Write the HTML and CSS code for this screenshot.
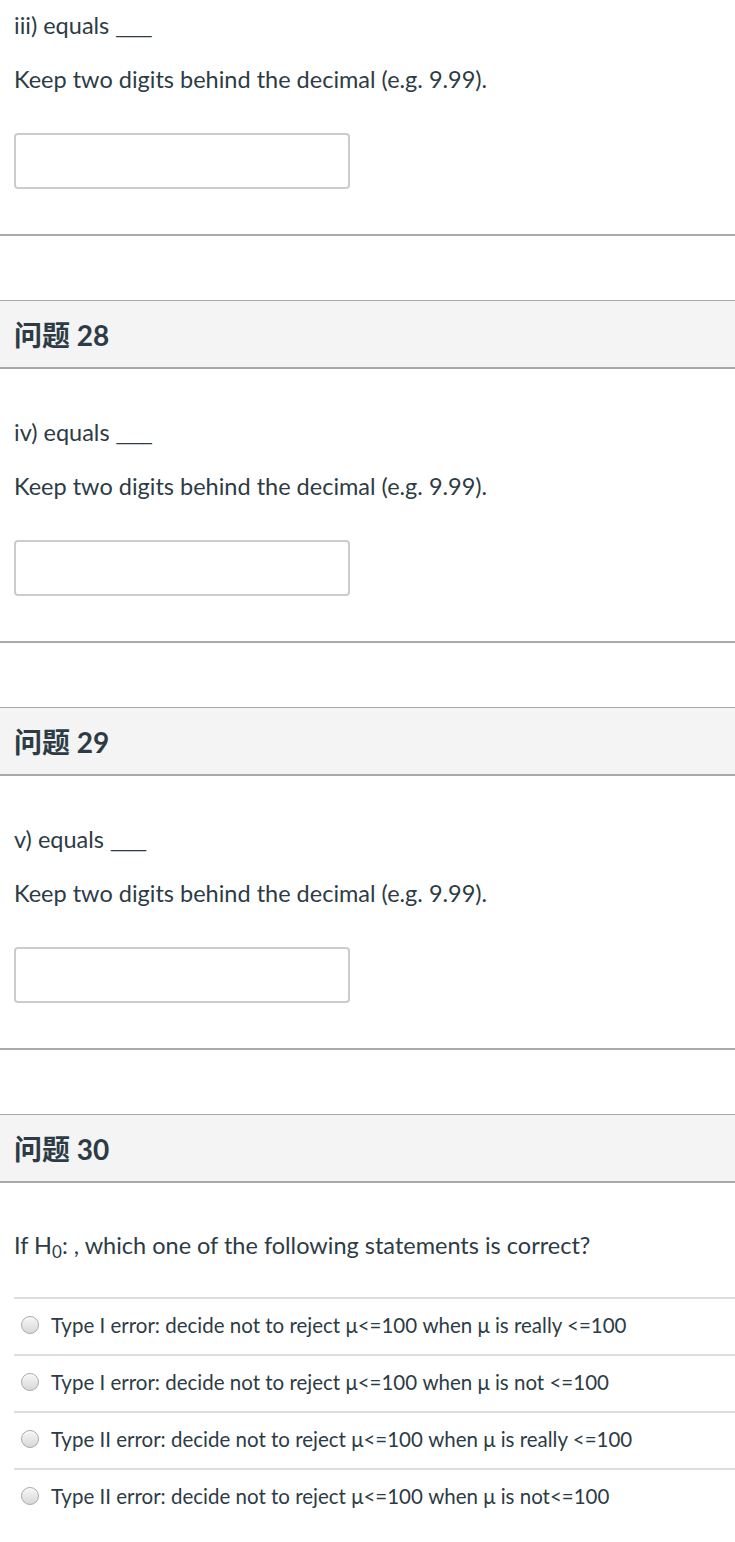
FILE: index.html
```html
<!DOCTYPE html>
<html lang="zh">
<head>
<meta charset="utf-8">
<title>Quiz</title>
<link rel="stylesheet" href="styles.css">
</head>
<body>
<div class="quiz">
  <section class="question first">
    <div class="q-body">
      <p class="q-line">iii) equals <span class="blank">____</span></p>
      <p class="q-line">Keep two digits behind the decimal (e.g. 9.99).</p>
      <input class="answer" type="text">
    </div>
  </section>

  <section class="question">
    <h2 class="q-header">问题 28</h2>
    <div class="q-body">
      <p class="q-line">iv) equals <span class="blank">____</span></p>
      <p class="q-line">Keep two digits behind the decimal (e.g. 9.99).</p>
      <input class="answer" type="text">
    </div>
  </section>

  <section class="question">
    <h2 class="q-header">问题 29</h2>
    <div class="q-body">
      <p class="q-line">v) equals <span class="blank">____</span></p>
      <p class="q-line">Keep two digits behind the decimal (e.g. 9.99).</p>
      <input class="answer" type="text">
    </div>
  </section>

  <section class="question last">
    <h2 class="q-header">问题 30</h2>
    <div class="q-body">
      <p class="q-line">If H<sub>0</sub>: , which one of the following statements is correct?</p>
      <ul class="options">
        <li class="option"><span class="radio"></span><span class="opt-text">Type I error: decide not to reject μ&lt;=100 when μ is really &lt;=100</span></li>
        <li class="option"><span class="radio"></span><span class="opt-text">Type I error: decide not to reject μ&lt;=100 when μ is not &lt;=100</span></li>
        <li class="option"><span class="radio"></span><span class="opt-text">Type II error: decide not to reject μ&lt;=100 when μ is really &lt;=100</span></li>
        <li class="option"><span class="radio"></span><span class="opt-text">Type II error: decide not to reject μ&lt;=100 when μ is not&lt;=100</span></li>
      </ul>
    </div>
  </section>
</div>
</body>
</html>
```

FILE: styles.css
```css
html, body {
  margin: 0;
  padding: 0;
  background: #fff;
}

body {
  font-family: Lato, "Noto Sans CJK SC", sans-serif;
  color: #2d3b45;
  font-size: 23.5px;
}

.quiz {
  display: flex;
  flex-direction: column;
}

.question {
  border-bottom: 2px solid #aaaaaa;
  margin-bottom: 64px;
}

.question.last {
  border-bottom: none;
  margin-bottom: 0;
}

.q-header {
  margin: 0;
  height: 66px;
  display: flex;
  align-items: center;
  padding-left: 14px;
  background: #f4f4f4;
  border-top: 1px solid #aaaaaa;
  border-bottom: 2px solid #aaaaaa;
  font-family: Lato, "Noto Sans CJK SC", sans-serif;
  font-weight: 700;
  font-size: 28px;
  color: #2d3b45;
}

.q-body {
  padding: 48px 0 45px 14px;
  display: flex;
  flex-direction: column;
  align-items: flex-start;
}

.question.first .q-body {
  padding-top: 10px;
}

.question.last .q-body {
  padding-top: 47px;
  padding-bottom: 20px;
}

.q-line {
  margin: 0 0 24px 0;
  line-height: 30px;
}

.blank {
  letter-spacing: -2px;
}

.q-line sub {
  font-size: 17px;
  vertical-align: -4px;
  line-height: 0;
}

.answer {
  margin-top: 15px;
  width: 336px;
  height: 56px;
  box-sizing: border-box;
  border: 2px solid #cccccc;
  border-radius: 4px;
  background: #fff;
  font: inherit;
  padding: 0 10px;
}

.options {
  list-style: none;
  margin: 13px 0 0 0;
  padding: 0;
  align-self: stretch;
}

.option {
  display: flex;
  align-items: center;
  gap: 12px;
  height: 51px;
  padding: 0 0 4px 7px;
  border-top: 2px solid #dddddd;
}

.radio {
  flex: none;
  width: 16px;
  height: 16px;
  border-radius: 50%;
  border: 1px solid #a9a9a9;
  background: linear-gradient(#f7f7f7, #d8d8d8);
  box-shadow: inset 0 1px 1px rgba(255,255,255,0.8);
}

.opt-text {
  font-size: 20.5px;
  letter-spacing: 0;
}
```
